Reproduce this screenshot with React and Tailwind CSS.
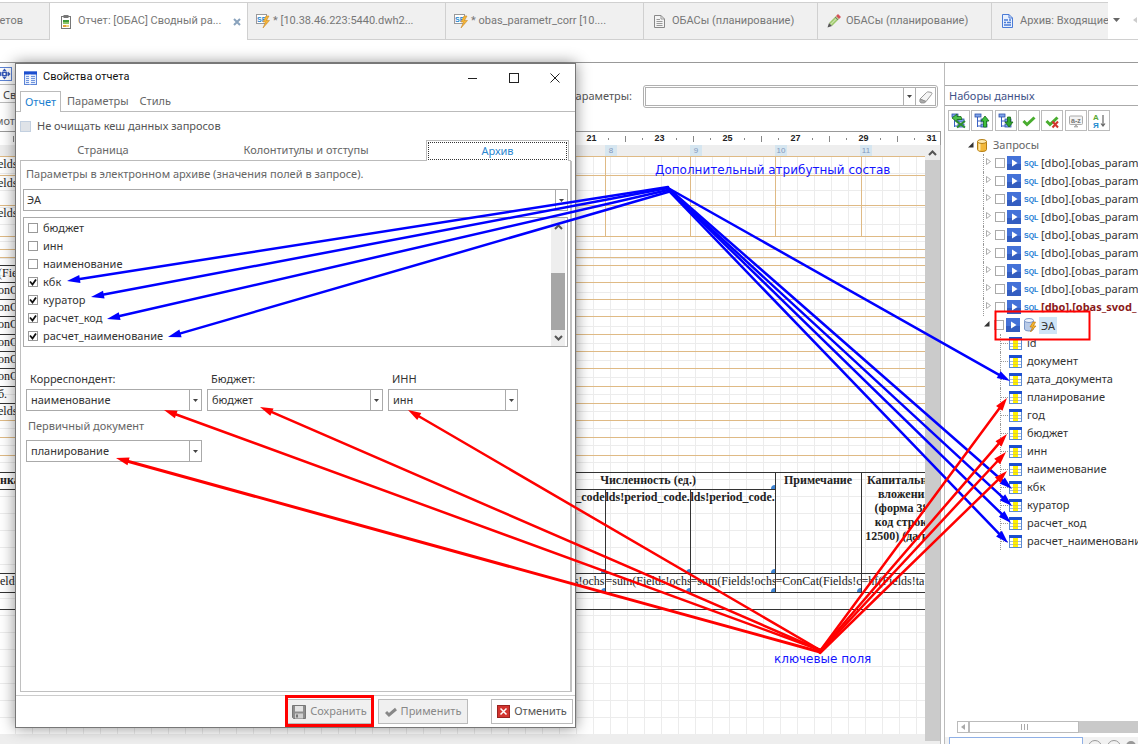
import React from "react";

/* ---------- icons ---------- */

const ReportIcon = () => (
  <svg width="12" height="14" viewBox="0 0 12 14" className="shrink-0">
    <rect x="1.5" y="1.5" width="9" height="12" fill="#fff" stroke="#777" />
    <rect x="3.5" y="0" width="5" height="3" fill="#777" />
    <rect x="3" y="5" width="6" height="2" fill="#3f9a3a" />
    <rect x="3" y="7" width="6" height="2" fill="#8cc468" />
    <rect x="3" y="10" width="3" height="2" fill="#e2a33a" />
    <rect x="6" y="10" width="3" height="2" fill="#efcf80" />
  </svg>
);

const SqlBoltIcon = () => (
  <svg width="14" height="14" viewBox="0 0 14 14" className="shrink-0">
    <rect x="0.5" y="0.5" width="10" height="9" fill="#fff" stroke="#999" />
    <text x="1" y="7.500" fontSize="7" fontWeight="bold" fill="#1d86cf" fontFamily="Liberation Sans, sans-serif">SP</text>
    <path d="M10 2L7 8h2.500L7 14l6.500-7.500h-3L13 2z" fill="#f5b638" stroke="#c98a2a" strokeWidth="0.6" />
  </svg>
);

const DocIcon = () => (
  <svg width="11" height="14" viewBox="0 0 11 14" className="shrink-0">
    <path d="M0.5 1.500H7L10.500 5V13.500H0.500z" fill="#f4f4f4" stroke="#888" />
    <path d="M7 1.500V5H10.500M2.500 5.500H6M2.500 7.500H8.500M2.500 9.500H8.500M2.500 11.500H8.500" fill="none" stroke="#999" />
  </svg>
);

const PencilIcon = () => (
  <svg width="14" height="14" viewBox="0 0 14 14" className="shrink-0">
    <path d="M2 9L9 2l3 3-7 7z" fill="#9cc76a" />
    <path d="M3.500 10.500L10.500 3.500" stroke="#c9e3a8" strokeWidth="1.2" />
    <path d="M9 2l2-2 3 3-2 2z" fill="#d4545a" />
    <path d="M2 9l3 3-4.500 1.500z" fill="#555" />
    <path d="M8 3l3 3" stroke="#777" strokeWidth="1" />
  </svg>
);

const ArchiveIcon = () => (
  <svg width="11" height="14" viewBox="0 0 11 14" className="shrink-0">
    <path d="M0.500 0.500H7L10.500 4V13.500H0.500z" fill="#e8f0fd" stroke="#4a7bd6" />
    <path d="M7 0.500V4H10.500" fill="none" stroke="#4a7bd6" />
    <path d="M2 6H6M7 6H9M2 8.500H4M5 8.500H9M2 11H9" stroke="#4a7bd6" strokeWidth="1.400" />
  </svg>
);

const WindowIcon = () => (
  <svg width="13" height="14" viewBox="0 0 13 14" className="shrink-0">
    <rect x="0.500" y="1" width="12" height="12.500" fill="#e4edfc" stroke="#5d84d6" />
    <rect x="0" y="0.500" width="13" height="3" fill="#1c4fd0" />
    <path d="M2 5.500H5M2 7.500H5M2 9.500H5M2 11.500H5M7 5.500H11M7 7.500H11M7 9.500H11M7 11.500H11" stroke="#6f93dc" />
    <path d="M6 3.500V13.500" stroke="#fff" />
  </svg>
);

const MoveIcon = () => (
  <svg width="12" height="14" viewBox="0 0 12 14" className="shrink-0">
    <rect x="-4" y="0.500" width="15.500" height="13" fill="#fff" stroke="#5d84d6" />
    <path d="M4.500 1.500l2.500 3H2zM4.500 12.500l2.500-3H2zM10.500 7L8 4.500v5zM-1.500 7L1 4.500v5z" fill="#3558b8" />
    <rect x="1.500" y="5" width="6" height="4" fill="#3558b8" />
    <rect x="3.500" y="6" width="2" height="2" fill="#fff" />
  </svg>
);

const EraserIcon = () => (
  <svg width="16" height="14" viewBox="0 0 16 14">
    <path d="M2 9L8.500 2.500Q9.500 1.500 11 2l2.500 0.500Q14.500 3 13.500 4.500L8 11.500z" fill="#f4f4f4" stroke="#999" />
    <path d="M2 9l6 2.500-1.500 1.500H3Q1 12 2 9z" fill="#aaa" stroke="#888" strokeWidth="0.700" />
  </svg>
);

const TreeGlyph = ({ variant }) => (
  <svg width="16" height="16" viewBox="0 0 16 16">
    <path d="M3.500 3V14M3.500 8H8M3.500 13H8" fill="none" stroke="#3b62c4" />
    <rect x="1" y="1" width="6" height="3" fill="#7fa4ec" stroke="#2d50a8" strokeWidth="0.800" />
    <rect x="7" y="6" width="6" height="3" fill="#7fa4ec" stroke="#2d50a8" strokeWidth="0.800" />
    <rect x="7" y="11" width="6" height="3" fill="#7fa4ec" stroke="#2d50a8" strokeWidth="0.800" />
    {variant === "refresh" && (
      <>
        <path d="M1 5l5-4v2.500h4l1 3H6V9z" fill="#4cc04c" stroke="#176b17" strokeWidth="0.800" />
        <path d="M5 8l9 6.500M14 8l-8 6.500" stroke="#2d8f2d" strokeWidth="2" />
      </>
    )}
    {variant === "up" && (
      <path d="M11 3l4 5h-2.500v6h-3V8H7z" fill="#3ec03e" stroke="#176b17" strokeWidth="0.800" />
    )}
    {variant === "down" && (
      <path d="M11 14l4-5h-2.500V4h-3v5H7z" fill="#2fa32f" stroke="#176b17" strokeWidth="0.800" />
    )}
  </svg>
);

const CheckGlyph = ({ crossed }) => (
  <svg width="16" height="16" viewBox="0 0 16 16">
    <path d="M2.500 8l3.500 3.500 7.500-7" fill="none" stroke="#49ad2f" strokeWidth="3" />
    {crossed && <path d="M8.500 8.500l5.500 6M14 8.500l-5.500 6" stroke="#d0342c" strokeWidth="2" />}
  </svg>
);

const AzGlyph = () => (
  <svg width="16" height="16" viewBox="0 0 16 16">
    <rect x="1.500" y="3" width="13" height="8.500" rx="1" fill="#f2f2f2" stroke="#aaa" />
    <path d="M6 14h4l-2-2z" fill="#bbb" stroke="#999" strokeWidth="0.600" />
    <text x="3" y="9.500" fontSize="7" fontWeight="bold" fill="#777" fontFamily="Liberation Sans, sans-serif">a-z</text>
  </svg>
);

const SortGlyph = () => (
  <svg width="16" height="16" viewBox="0 0 16 16">
    <text x="2" y="7" fontSize="8" fontWeight="bold" fill="#5aa832" fontFamily="Liberation Sans, sans-serif">A</text>
    <text x="2" y="15" fontSize="8" fontWeight="bold" fill="#1b8ad0" fontFamily="Liberation Sans, sans-serif">Я</text>
    <path d="M12 2v10M10 10.500l2 2.500 2-2.500" fill="none" stroke="#666" strokeWidth="1.200" />
  </svg>
);

const DbIcon = () => (
  <svg width="10" height="13" viewBox="0 0 10 13" className="shrink-0">
    <path d="M0.500 2.500v8q0 2 4.500 2t4.500-2v-8z" fill="#f3b83a" stroke="#b47d12" />
    <path d="M2.500 4v7.500" stroke="#fde7a6" strokeWidth="2" />
    <ellipse cx="5" cy="2.500" rx="4.500" ry="2" fill="#fde9b0" stroke="#b47d12" />
  </svg>
);

const DbBoltIcon = () => (
  <svg width="13" height="14" viewBox="0 0 13 14" className="shrink-0">
    <path d="M0.500 2.500v8.500q0 2 4.500 2t4.500-2v-8.500z" fill="#b9cbe8" stroke="#7c98c8" />
    <ellipse cx="5" cy="2.500" rx="4.500" ry="2" fill="#eef3fc" stroke="#7c98c8" />
    <path d="M9 4L6 9h2.500L6.500 14 12 8H9.500l2-4z" fill="#f6b52b" stroke="#c07d14" strokeWidth="0.700" />
  </svg>
);

const PlayIcon = () => (
  <svg width="14" height="14" viewBox="0 0 14 14" className="shrink-0">
    <rect width="14" height="14" fill="#4472d8" />
    <rect y="8" width="14" height="6" fill="#335dc0" />
    <path d="M5 3.500v7l5.500-3.500z" fill="#fff" />
  </svg>
);

const SqlIcon = () => (
  <svg width="15" height="12" viewBox="0 0 15 12" className="shrink-0">
    <text x="0" y="9" fontSize="7" fontWeight="bold" fill="#1b7cd4" fontFamily="Liberation Sans, sans-serif">SQL</text>
  </svg>
);

const FieldIcon = () => (
  <svg width="13" height="13" viewBox="0 0 13 13" className="shrink-0">
    <rect x="0.500" y="0.500" width="12" height="12" fill="#fff" stroke="#5d8ad0" />
    <path d="M1 6.500H12M1 9.500H12" stroke="#9dbce6" />
    <rect x="4" y="3" width="5" height="9" fill="#fff200" />
    <path d="M4 6.500H9M4 9.500H9" stroke="#e0c83a" />
    <rect width="13" height="3" fill="#1c4fd0" />
  </svg>
);

const SaveIcon = () => (
  <svg width="14" height="14" viewBox="0 0 14 14" className="shrink-0">
    <path d="M0.500 0.500H13.500V13.500H1.500L0.500 12.500z" fill="#8e8e8e" stroke="#777" />
    <rect x="3" y="1" width="8" height="5.500" fill="#e4e4e4" />
    <rect x="3" y="8.500" width="8" height="5" fill="#cfcfcf" />
    <rect x="4" y="9.500" width="2" height="3" fill="#777" />
  </svg>
);

const ApplyIcon = () => (
  <svg width="12" height="12" viewBox="0 0 12 12" className="shrink-0">
    <path d="M1 6l3 3L11 3" fill="none" stroke="#888" strokeWidth="3" />
  </svg>
);

const CancelIcon = () => (
  <svg width="13" height="13" viewBox="0 0 13 13" className="shrink-0">
    <rect x="0.500" y="0.500" width="12" height="12" fill="#d3332e" stroke="#9a2320" />
    <path d="M3.500 3.500l6 6M9.500 3.500l-6 6" stroke="#fff" strokeWidth="1.500" />
  </svg>
);

const Caret = () => (
  <svg width="5" height="3" viewBox="0 0 5 3" className="shrink-0">
    <path d="M0 0h5L2.500 3z" fill="#444" />
  </svg>
);

const Chevron = ({ down }) => (
  <svg width="9" height="6" viewBox="0 0 9 6" className="shrink-0">
    <path d={down ? "M1 1l3.500 3.500L8 1" : "M1 5l3.500-3.500L8 5"} fill="none" stroke="#555" strokeWidth="2" />
  </svg>
);

/* ---------- document tabs ---------- */

const TABS = [
  { text: "Отчет: [ОБАС] Сводный ра...", icon: ReportIcon, cls: "w-[198px] pl-[10px] gap-[6px] bg-white", active: true },
  { text: "* [10.38.46.223:5440.dwh2...", icon: SqlBoltIcon, cls: "w-[198px] pl-[8px] gap-[3px] bg-[#f0f0f0] border-b" },
  { text: "* obas_parametr_corr [10....", icon: SqlBoltIcon, cls: "w-[198px] pl-[8px] gap-[3px] bg-[#f0f0f0] border-b" },
  { text: "ОБАСы (планирование)", icon: DocIcon, cls: "w-[174px] pl-[10px] gap-[7px] bg-[#f0f0f0] border-b" },
  { text: "ОБАСы (планирование)", icon: PencilIcon, cls: "w-[174px] pl-[9px] gap-[5px] bg-[#f0f0f0] border-b" },
];

function DocumentTabs() {
  return (
    <nav className="flex h-10 shrink-0 pt-[2px] font-['Roboto',sans-serif] text-[11px] text-[#777]">
      <button className="flex w-[49px] shrink-0 items-center justify-end whitespace-nowrap border-t border-b border-[#d0d0d0] bg-[#f0f0f0] pr-[26px]">
        четов
      </button>
      {TABS.map((t, i) => (
        <button key={i} className={`flex shrink-0 items-center whitespace-nowrap border-t border-l border-[#d0d0d0] ${t.cls}`}>
          <t.icon />
          <span>{t.text}</span>
          {t.active && (
            <svg width="8" height="8" viewBox="0 0 8 8" className="ml-auto mr-[6px]">
              <path d="M1 1l6 6M7 1L1 7" stroke="#8aa3bd" strokeWidth="2" />
            </svg>
          )}
        </button>
      ))}
      <button className="flex min-w-0 flex-1 items-center gap-[7px] overflow-hidden whitespace-nowrap border-t border-b border-l border-[#d0d0d0] bg-[#f0f0f0] pl-[10px]">
        <ArchiveIcon />
        <span>Архив: Входящие</span>
      </button>
      <div className="flex w-[30px] shrink-0 items-center justify-between border-b border-[#d0d0d0] pb-[2px] pl-[5px]">
        <svg width="7" height="4" viewBox="0 0 7 4"><path d="M0 0h7L3.500 4z" fill="#666" /></svg>
        <svg width="5" height="6" viewBox="0 0 5 6"><path d="M4 0v6L0 3z" fill="#ccc" /></svg>
      </div>
    </nav>
  );
}

/* ---------- report designer ---------- */

const RULER = Array.from({ length: 56 }, (_, i) => {
  const back = 55 - i;
  const phase = back % 4;
  if (phase === 0) return 31 - back / 2;
  return phase === 2 ? "major" : "minor";
});

const BANDS = [
  { h: "h-[19px]", text: "elds", cols: true },
  { h: "h-[30px]", text: "elds", cols: true },
  { h: "h-[31px]", text: "elds", cols: true },
  { h: "h-[13px]" },
  { h: "h-[8px]" },
  { h: "h-[8px]" },
  { h: "h-[17px]", text: "(Fie", dark: true },
  { h: "h-[17px]", text: "onC", dark: true },
  { h: "h-[17px]", text: "onC", dark: true },
  { h: "h-[18px]", text: "onC", dark: true },
  { h: "h-[17px]", text: "onC", dark: true },
  { h: "h-[17px]", text: "onC", dark: true },
  { h: "h-[18px]", text: "onC", dark: true },
  { h: "h-[17px]", text: "б.", dark: true },
  { h: "h-[17px]", text: "elds", dark: true },
  { h: "h-[17px]" },
  { h: "h-[18px]" },
  { h: "h-[17px]" },
];

const Handle = () => <i className="absolute right-0 bottom-0 size-[4px] rounded-tl-sm bg-[#3d83d3]" />;

const Cell = ({ children, className = "", handle, ...rest }) => (
  <td className={`relative overflow-hidden border border-[#333] p-0 align-top whitespace-nowrap ${className}`} {...rest}>
    {children}
    {handle && <Handle />}
  </td>
);

function ReportCanvas() {
  return (
    <div className="h-[578px] overflow-hidden bg-white bg-[linear-gradient(to_right,#ececec_1px,transparent_1px),linear-gradient(to_bottom,#ececec_1px,transparent_1px)] bg-[size:17px_17px] bg-[position:15px_0px] font-['Liberation_Serif',serif] text-[12px] leading-[14px] text-[#222]">
      {BANDS.map((b, i) => (
        <div key={i} className={`flex ${b.h}`}>
          <div className={`w-[521px] shrink-0 whitespace-nowrap border-t -indent-[2px] ${b.dark ? "border-[#333]" : "border-[#dfba85]"}`}>{b.text}</div>
          <div className="flex flex-1 border-t border-[#dfba85]">
            {b.cols && (
              <>
                <div className="w-[84px]" />
                <div className="w-[85px] border-l border-[#dfba85]" />
                <div className="w-[85px] border-l border-[#dfba85]" />
                <div className="w-[86px] border-l border-[#dfba85]" />
                <div className="flex-1 border-l border-[#dfba85]" />
              </>
            )}
          </div>
        </div>
      ))}
      <table className="w-[948px] table-fixed border-collapse">
        <colgroup>
          <col className="w-[521px]" />
          <col className="w-[84px]" />
          <col className="w-[85px]" />
          <col className="w-[85px]" />
          <col className="w-[86px]" />
          <col className="w-[87px]" />
        </colgroup>
        <tbody>
          <tr className="h-[17px] font-bold">
            <Cell className="h-[17px] border-l-0">нка</Cell>
            <Cell colSpan={3} className="text-center" handle>Численность (ед.)</Cell>
            <Cell rowSpan={2} className="text-center">Примечание</Cell>
            <Cell rowSpan={2} className="text-center">
              Капитальные<br />вложения<br />(форма 385<br />код строки<br />12500) (да/нет)
            </Cell>
          </tr>
          <tr className="h-[84px] font-bold">
            <Cell className="border-l-0" />
            <Cell className="text-right" handle>lds!period_code</Cell>
            <Cell handle>lds!period_code.</Cell>
            <Cell handle>lds!period_code.V</Cell>
          </tr>
          <tr className="h-[19px]">
            <Cell className="border-l-0">elds</Cell>
            <Cell className="text-right" handle>(Fields!ochs</Cell>
            <Cell handle>=sum(Fields!ochs</Cell>
            <Cell handle>=sum(Fields!ochs</Cell>
            <Cell handle>=ConCat(Fields!c</Cell>
            <Cell>=hf(Fields!ta</Cell>
          </tr>
          <tr className="h-[17px]">
            <Cell colSpan={6} className="border-l-0" />
          </tr>
        </tbody>
      </table>
    </div>
  );
}

function Designer() {
  return (
    <main className="flex min-w-0 flex-1 flex-col">
      <div className="flex h-[68px] shrink-0 justify-between">
        <div className="flex w-[120px] flex-col text-[11px] text-[#444]">
          <div className="flex h-[21px] items-center"><MoveIcon /></div>
          <div className="h-[19px] border-t border-b border-[#bbb] pl-[3px] leading-[19px]">Св</div>
          <div className="pt-[10px] leading-[16px] text-[#666] -indent-[5px]">мотр</div>
        </div>
        <div className="flex h-[68px] items-start pt-[22px] pr-[6px]">
          <label htmlFor="params" className="pt-[2px] pr-[11px] text-[11px] leading-[18px] text-[#555]">Параметры:</label>
          <div className="flex h-[23px] w-[295px] rounded-[3px] border border-[#b0b0b0] p-px">
            <input id="params" className="min-w-0 flex-1 border border-[#b0b0b0] bg-white px-1 text-[11px] outline-none" />
            <button aria-label="Список параметров" className="flex w-[12px] items-center justify-center border border-l-0 border-[#b0b0b0]"><Caret /></button>
            <button aria-label="Очистить" className="flex w-[20px] items-center justify-center border border-l-0 border-[#b0b0b0]"><EraserIcon /></button>
          </div>
        </div>
      </div>
      <div className="mr-[3px] flex h-[14px] shrink-0 justify-end overflow-hidden border-t border-r border-[#999] font-['Liberation_Sans',sans-serif] text-[9px] font-bold text-[#222]">
        {RULER.map((m, i) => (
          <div key={i} className="flex w-[17px] shrink-0 items-center justify-center">
            {m === "major" ? <i className="h-[6px] w-px bg-[#888]" /> : m === "minor" ? <i className="h-[2px] w-px bg-[#888]" /> : m}
          </div>
        ))}
      </div>
      <div className="mr-[3px] flex min-h-0 flex-1 border-r border-[#bbb]">
        <div className="min-w-0 flex-1 overflow-hidden bg-[#eeeeee]">
          <div className="flex h-[11px] pl-[605px] font-['Liberation_Sans',sans-serif] text-[8px] leading-[11px] text-[#8298bd]">
            {["8", "9", "10", "11"].map((n) => (
              <div key={n} className="w-[85px] shrink-0">
                <span className="block w-[12px] bg-[#d6e6f0] text-center">{n}</span>
              </div>
            ))}
          </div>
          <ReportCanvas />
        </div>
        <div className="flex w-[15px] shrink-0 flex-col bg-[#eeeeee] pb-[3px]">
          <div className="flex h-[15px] items-center justify-center"><Chevron /></div>
          <div className="flex-1 bg-[#cbcbcb]" />
        </div>
      </div>
    </main>
  );
}

/* ---------- data sets panel ---------- */

const TOOLS = [
  ["Обновить", <TreeGlyph variant="refresh" />],
  ["Вверх", <TreeGlyph variant="up" />],
  ["Вниз", <TreeGlyph variant="down" />],
  ["Отметить", <CheckGlyph />],
  ["Снять отметку", <CheckGlyph crossed />],
  ["Переименовать", <AzGlyph />],
  ["Сортировать", <SortGlyph />],
];

const QUERIES = [
  ...Array.from({ length: 8 }, () => ({ text: "[dbo].[obas_param" })),
  { text: "[dbo].[obas_svod_", bold: true },
];

const FIELDS = [
  "id", "документ", "дата_документа", "планирование", "год", "бюджет", "инн",
  "наименование", "кбк", "куратор", "расчет_код", "расчет_наименование",
];

const RowCheck = ({ label }) => (
  <input type="checkbox" aria-label={label} className="ml-[4px] size-[10px] shrink-0 appearance-none border border-[#aaa] bg-white" />
);

function DataSets() {
  return (
    <aside className="flex w-[194px] shrink-0 flex-col overflow-hidden border-l border-[#bbb] text-[11px]">
      <h2 className="mt-[22px] h-[21px] shrink-0 border-t border-b border-[#aaa] pl-1 leading-[20px] text-[#3f5288]">Наборы данных</h2>
      <div className="mt-1 ml-[3px] flex w-[162px] shrink-0 justify-between">
        {TOOLS.map(([name, icon]) => (
          <button key={name} aria-label={name} className="flex h-[21px] w-[22px] items-center justify-center border border-[#bbb]">{icon}</button>
        ))}
      </div>
      <ul className="mt-[5px] whitespace-nowrap text-[#333]">
        <li className="flex h-[18px] items-center pl-[23px] text-[#666]">
          <svg width="6" height="6" viewBox="0 0 6 6" className="mr-[3px] shrink-0"><path d="M5.500 0v5.500H0z" fill="#333" /></svg>
          <DbIcon />
          <span className="ml-[6px]">Запросы</span>
        </li>
        {QUERIES.map((q, i) => (
          <li key={i} className="ml-[38px] flex h-[18px] items-center border-l border-dotted border-[#999] pl-[2px]">
            <svg width="5" height="7" viewBox="0 0 5 7" className="mb-[4px] shrink-0"><path d="M0.500 0.500v6l4-3z" fill="#fff" stroke="#999" strokeWidth="0.800" /></svg>
            <RowCheck label={q.text} />
            <span className="ml-[2px] flex"><PlayIcon /></span>
            <span className="ml-[3px] flex"><SqlIcon /></span>
            <span className={`ml-[2px] ${q.bold ? "font-bold text-[#8b1a1a]" : ""}`}>{q.text}</span>
          </li>
        ))}
        <li className="flex h-[18px] items-center pl-[39px]">
          <svg width="6" height="6" viewBox="0 0 6 6" className="mb-[3px] shrink-0"><path d="M5.500 0v5.500H0z" fill="#333" /></svg>
          <RowCheck label="ЭА" />
          <span className="ml-[2px] flex"><PlayIcon /></span>
          <span className="ml-[4px] flex"><DbBoltIcon /></span>
          <span className="ml-[2px] bg-[#cfe5f7] px-[2px] leading-[17px]">ЭА</span>
        </li>
        {FIELDS.map((f) => (
          <li key={f} className="ml-[55px] flex h-[18px] items-center border-l border-dotted border-[#999]">
            <i className="mr-px w-[7px] shrink-0 border-t border-dotted border-[#999]" />
            <FieldIcon />
            <span className="ml-[5px]">{f}</span>
          </li>
        ))}
      </ul>
      <div className="mt-auto ml-[12px] flex h-[12px] shrink-0 bg-[#c9c9c9]">
        <button aria-label="Влево" className="flex w-[12px] items-center justify-center border border-[#bbb] bg-white">
          <svg width="4" height="6" viewBox="0 0 4 6"><path d="M4 0v6L0 3z" fill="#aaa" /></svg>
        </button>
        <div className="flex w-[110px] items-center justify-center gap-[2px] border border-[#bbb] bg-white">
          <i className="h-[6px] w-px bg-[#aaa]" /><i className="h-[6px] w-px bg-[#aaa]" /><i className="h-[6px] w-px bg-[#aaa]" />
        </div>
      </div>
      <div className="mt-[4px] flex h-[7px] shrink-0 gap-[5px] overflow-hidden bg-[#f2f2f2] pl-[4px]">
        <input aria-label="Поиск" className="h-[22px] w-[134px] shrink-0 border border-[#8fb0e6] bg-white outline-none" />
        <i className="mt-[3px] size-[14px] shrink-0 rounded-full border border-[#999]" />
        <i className="mt-[3px] size-[14px] shrink-0 rounded-full border border-[#999]" />
        <i className="mt-[4px] size-[10px] shrink-0 rounded-full bg-[#999]" />
      </div>
    </aside>
  );
}

/* ---------- properties window ---------- */

function Combo({ id, value, className = "", pad = "pl-1", label }) {
  return (
    <div className={`relative flex h-[22px] border border-[#aaa] bg-white ${className}`}>
      <select id={id} aria-label={label} className={`min-w-0 flex-1 appearance-none bg-transparent text-[#333] outline-none ${pad}`}>
        <option>{value}</option>
      </select>
      <span className="pointer-events-none flex w-[12px] items-center justify-center border-l border-[#aaa]"><Caret /></span>
    </div>
  );
}

const ATTRS = [
  ["бюджет", false], ["инн", false], ["наименование", false],
  ["кбк", true], ["куратор", true], ["расчет_код", true], ["расчет_наименование", true],
];

function PropertiesWindow() {
  return (
    <section role="dialog" aria-label="Свойства отчета" className="absolute top-[63px] left-[15px] flex w-[561px] flex-col border border-[#777] bg-white text-[11px] text-[#333] shadow-[0_0_14px_rgba(0,0,0,0.45)]">
      <header className="flex h-[27px] items-center pl-[8px]">
        <WindowIcon />
        <h1 className="ml-[6px] font-['Roboto',sans-serif] text-[11px] text-[#111]">Свойства отчета</h1>
        <div className="ml-auto flex">
          <button aria-label="Свернуть" className="flex w-[41px] items-center justify-center"><svg width="10" height="10" viewBox="0 0 10 10"><path d="M0 5.500H9" stroke="#222" /></svg></button>
          <button aria-label="Развернуть" className="flex w-[41px] items-center justify-center"><svg width="10" height="10" viewBox="0 0 10 10"><rect x="0.500" y="0.500" width="9" height="9" fill="none" stroke="#222" /></svg></button>
          <button aria-label="Закрыть" className="flex w-[41px] items-center justify-center"><svg width="10" height="10" viewBox="0 0 10 10"><path d="M0.500 0.500l9 9M9.500 0.500l-9 9" stroke="#222" /></svg></button>
        </div>
      </header>
      <nav className="flex h-[21px] border-b border-[#bbb] text-[#666]">
        <button className="-mb-px ml-[4px] w-[41px] border-t border-r border-l border-[#bbb] bg-white text-center text-[#1a7fd0]">Отчет</button>
        <button className="ml-[6px]">Параметры</button>
        <button className="ml-[11px]">Стиль</button>
      </nav>
      <label className="flex h-[28px] items-center gap-[6px] pl-[4px] text-[#555]">
        <input type="checkbox" className="size-[11px] appearance-none border border-[#c3d0e0] bg-[#dfe3e8]" />
        Не очищать кеш данных запросов
      </label>
      <div className="ml-[4px] mr-[4px] flex h-[21px] items-end text-[#666]">
        <button className="h-full w-[166px] border-b border-[#bbb]">Страница</button>
        <button className="h-full flex-1 border-b border-[#bbb]">Колонтитулы и отступы</button>
        <button className="h-full w-[143px] border border-b-0 border-[#bbb] p-px text-[#2b86d0]">
          <span className="flex h-full items-center justify-center border border-dotted border-[#333]">Архив</span>
        </button>
        <i className="w-[2px] border-b border-[#bbb]" />
      </div>
      <div className="mr-[3px] ml-[4px] flex h-[531px] flex-col border-b border-l border-r-2 border-[#c0c0c0]">
        <p className="mt-[5px] ml-[5px] leading-[16px] text-[#666]">Параметры в электронном архиве (значения полей в запросе).</p>
        <Combo label="Запрос" value="ЭА" className="mt-[7px] mr-[2px] ml-[2px]" pad="pl-[3px]" />
        <div className="mt-[6px] mr-[2px] ml-[2px] flex border border-[#aaa]">
          <ul className="flex-1 pt-px pb-px">
            {ATTRS.map(([name, on]) => (
              <li key={name}>
                <label className="flex h-[18px] items-center gap-[5px] pl-[4px]">
                  <span className="relative flex">
                    <input type="checkbox" defaultChecked={on} className="peer size-[10px] appearance-none border border-[#999] bg-white" />
                    <svg width="10" height="10" viewBox="0 0 10 10" className="pointer-events-none absolute inset-0 hidden peer-checked:block"><path d="M2 4.500l2.500 3L8 2.500" fill="none" stroke="#111" strokeWidth="1.800" /></svg>
                  </span>
                  {name}
                </label>
              </li>
            ))}
          </ul>
          <div className="mr-[2px] flex w-[14px] flex-col items-center bg-[#eeeeee]">
            <div className="flex h-[17px] items-center"><Chevron /></div>
            <div className="mt-auto h-[57px] w-full bg-[#a6a6a6]" />
            <div className="flex h-[16px] items-center"><Chevron down /></div>
          </div>
        </div>
        <div className="mt-[22px] ml-[5px] flex gap-[5px]">
          <div className="flex w-[176px] flex-col">
            <label htmlFor="corr" className="pl-[4px] leading-[20px]">Корреспондент:</label>
            <Combo id="corr" value="наименование" />
          </div>
          <div className="flex w-[176px] flex-col">
            <label htmlFor="budget" className="pl-[4px] leading-[20px]">Бюджет:</label>
            <Combo id="budget" value="бюджет" />
          </div>
          <div className="flex w-[130px] flex-col">
            <label htmlFor="inn" className="pl-[4px] leading-[20px]">ИНН</label>
            <Combo id="inn" value="инн" />
          </div>
        </div>
        <div className="mt-[5px] ml-[5px] flex w-[176px] flex-col">
          <label htmlFor="source" className="pb-[4px] pl-[2px] leading-[20px] text-[#666]">Первичный документ</label>
          <Combo id="source" value="планирование" />
        </div>
      </div>
      <footer className="mt-[3px] flex h-[32px] items-center border-t border-[#ccc] pr-[2px] text-[#888]">
        <button className="ml-auto flex h-[25px] w-[87px] items-center justify-center gap-[4px] border border-[#bbb] bg-[#f0f0f0]"><SaveIcon />Сохранить</button>
        <button className="ml-[5px] flex h-[25px] w-[90px] items-center justify-center gap-[4px] border border-[#bbb] bg-[#f0f0f0]"><ApplyIcon />Применить</button>
        <button className="ml-[23px] flex h-[25px] w-[82px] items-center justify-center gap-[4px] border border-[#bbb] bg-white text-[#555]"><CancelIcon />Отменить</button>
      </footer>
    </section>
  );
}

/* ---------- annotations ---------- */

const BLUE = [
  [668, 187, 67, 281], [668, 188, 91, 297], [668, 190, 107, 319], [668, 192, 168, 337],
  [668, 188, 1010, 381], [668, 188, 1012, 489], [668, 189, 1012, 506], [668, 189, 1011, 523], [667, 189, 1008, 543],
];
const RED = [
  [820, 650, 164, 410], [820, 650, 260, 407], [820, 650, 408, 410], [820, 652, 116, 458],
  [820, 651, 1007, 398], [820, 651, 1007, 434], [820, 652, 1006, 452], [820, 653, 1007, 471],
];

const Arrow = ({ p, color, width }) => {
  const [x1, y1, x2, y2] = p;
  const len = Math.hypot(x2 - x1, y2 - y1);
  const ux = (x2 - x1) / len;
  const uy = (y2 - y1) / len;
  const bx = x2 - ux * 13;
  const by = y2 - uy * 13;
  return (
    <g fill={color} stroke={color}>
      <path d={`M${x1} ${y1}L${bx} ${by}`} strokeWidth={width} strokeLinecap="round" />
      <path d={`M${x2} ${y2}L${bx - uy * 4} ${by + ux * 4}L${bx + uy * 4} ${by - ux * 4}z`} stroke="none" />
    </g>
  );
};

function Annotations() {
  return (
    <div className="pointer-events-none absolute inset-0 font-['DejaVu_Sans',sans-serif] text-[12px] leading-[14px] whitespace-nowrap text-[#1414ff]">
      <svg width="1138" height="744" viewBox="0 0 1138 744" className="absolute top-0 left-0">
        {BLUE.map((p, i) => <Arrow key={i} p={p} color="#0000ff" width={2.5} />)}
        {RED.map((p, i) => <Arrow key={i} p={p} color="#ff0000" width={i === 3 ? 3 : 2.5} />)}
        <rect x="995.500" y="311.500" width="94" height="28" fill="none" stroke="#ff0000" strokeWidth="2" />
        <rect x="286.500" y="696.500" width="86" height="29" fill="none" stroke="#ff0000" strokeWidth="3" />
      </svg>
      <span className="absolute top-[163px] left-[655px]">Дополнительный атрибутный состав</span>
      <span className="absolute top-[652px] left-[774px]">ключевые поля</span>
    </div>
  );
}

export default function App() {
  return (
    <div className="relative flex h-screen flex-col overflow-hidden bg-white font-['Noto_Sans',sans-serif]">
      <DocumentTabs />
      <div className="h-[23px] shrink-0 border-b border-[#999]" />
      <div className="flex min-h-0 flex-1">
        <Designer />
        <DataSets />
      </div>
      <PropertiesWindow />
      <Annotations />
    </div>
  );
}
